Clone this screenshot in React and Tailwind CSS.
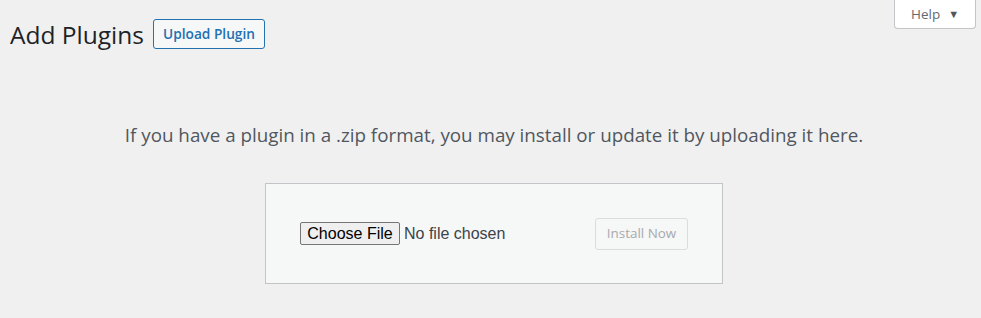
import React from "react";

export default function App() {
  return (
    <div className="min-h-screen bg-[#f0f0f1] font-['Open_Sans','Segoe_UI',sans-serif] text-[#3c434a]">
      <div className="flex items-start justify-between pl-[10px] pr-[5px]">
        <div className="flex items-center gap-[9px] pt-[19px]">
          <h1 className="text-[24.5px] leading-[30px] font-normal text-[#1d2327] translate-y-[1px]">
            Add Plugins
          </h1>
          <button className="w-[112px] h-[30px] border border-[#2271b1] rounded-[3px] bg-[#f6f7f7] text-[#2271b1] text-[13.7px] font-semibold">
            Upload Plugin
          </button>
        </div>
        <button className="flex items-center justify-center gap-[8px] w-[82px] h-[29px] bg-white border border-t-0 border-[#c3c4c7] rounded-b-[4px] text-[#646970] text-[13.5px]">
          Help
          <span className="text-[11px] text-[#50575e]">▼</span>
        </button>
      </div>

      <div className="pl-[10px] pr-[3px]">
        <p className="mt-[74px] text-center text-[18.8px] leading-[24px] text-[#50575e]">
          If you have a plugin in a .zip format, you may install or update it by uploading it here.
        </p>

        <div className="flex justify-center mt-[36px]">
          <form className="flex items-center justify-between w-[458px] h-[101px] px-[34px] border border-[#c3c4c7] bg-[#f6f7f7]">
            <div className="flex items-center gap-[4px]">
              <button
                type="button"
                className="w-[100px] h-[23px] border border-[#767676] rounded-[2px] bg-[#efefef] text-[16px] leading-none text-black font-['Liberation_Sans',Arial,sans-serif]"
              >
                Choose File
              </button>
              <span className="text-[16px] text-[#3c434a] font-['Liberation_Sans',Arial,sans-serif]">
                No file chosen
              </span>
            </div>
            <button
              type="button"
              disabled
              className="w-[93px] h-[32px] border border-[#dcdcde] rounded-[3px] bg-[#f6f7f7] text-[#a7aaad] text-[13.4px]"
            >
              Install Now
            </button>
          </form>
        </div>
      </div>
    </div>
  );
}
